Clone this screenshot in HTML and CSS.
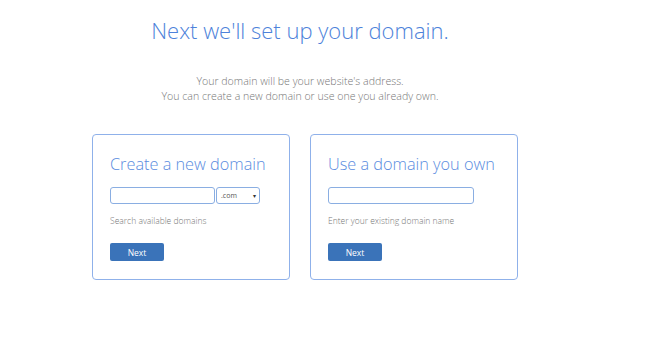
FILE: index.html
```html
<!DOCTYPE html>
<html lang="en">
<head>
  <meta charset="UTF-8">
  <meta name="viewport" content="width=device-width, initial-scale=1.0">
  <title>Set up your domain</title>
  <link rel="stylesheet" href="styles.css">
</head>
<body>
  <main class="page">
    <header class="intro">
      <h1>Next we'll set up your domain.</h1>
      <p>Your domain will be your website's address.<br>You can create a new domain or use one you already own.</p>
    </header>

    <section class="choices">
      <form class="card card-new">
        <h2>Create a new domain</h2>
        <div class="field-row">
          <input type="text" class="domain-input new-input" name="new_domain">
          <div class="tld-select">
            <span>.com</span>
            <span class="caret">&#9662;</span>
          </div>
        </div>
        <p class="hint">Search available domains</p>
        <button type="button">Next</button>
      </form>

      <form class="card card-own">
        <h2>Use a domain you own</h2>
        <div class="field-row">
          <input type="text" class="domain-input own-input" name="own_domain">
        </div>
        <p class="hint">Enter your existing domain name</p>
        <button type="button">Next</button>
      </form>
    </section>
  </main>
</body>
</html>
```

FILE: styles.css
```css
body {
  margin: 0;
  padding: 0;
  background-color: #fff;
  font-family: "Open Sans", "Liberation Sans", sans-serif;
}

.page {
  width: 600px;
}

.intro {
  text-align: center;
}

.intro h1 {
  margin: 16px 0 0;
  font-size: 22px;
  line-height: 28px;
  font-weight: 300;
  color: #4d82da;
}

.intro p {
  margin: 30px 0 0;
  font-size: 10.6px;
  line-height: 15px;
  font-weight: 300;
  color: #777;
}

.choices {
  display: flex;
  gap: 20px;
  margin-top: 30px;
  padding-left: 92px;
}

.card {
  box-sizing: border-box;
  border: 1px solid #8fb1ea;
  border-radius: 4px;
  padding: 18px 17px 18px;
}

.card-new {
  width: 198px;
}

.card-own {
  width: 208px;
}

.card h2 {
  margin: 0;
  font-size: 16.3px;
  line-height: 22px;
  font-weight: 300;
  color: #5a8ce0;
  white-space: nowrap;
}

.field-row {
  display: flex;
  gap: 1px;
  margin-top: 12px;
}

.domain-input {
  box-sizing: border-box;
  height: 17px;
  margin: 0;
  padding: 0 4px;
  border: 1px solid #8aaee2;
  border-radius: 3px;
}

.new-input {
  width: 105px;
}

.own-input {
  width: 146px;
}

.tld-select {
  box-sizing: border-box;
  display: flex;
  justify-content: space-between;
  align-items: center;
  width: 44px;
  height: 17px;
  padding: 0 3px 0 4px;
  border: 1px solid #8aaee2;
  border-radius: 3px;
  font-size: 7px;
  color: #555;
}

.tld-select .caret {
  font-size: 6px;
  color: #333;
}

.hint {
  margin: 11px 0 0;
  font-size: 8.5px;
  line-height: 12px;
  font-weight: 300;
  color: #777;
}

button {
  display: block;
  margin-top: 16px;
  width: 54px;
  height: 18px;
  padding: 0;
  border: none;
  border-radius: 2px;
  background-color: #3a73b9;
  color: #fff;
  font-family: "Open Sans", "Liberation Sans", sans-serif;
  font-size: 8.5px;
  cursor: pointer;
}
```
